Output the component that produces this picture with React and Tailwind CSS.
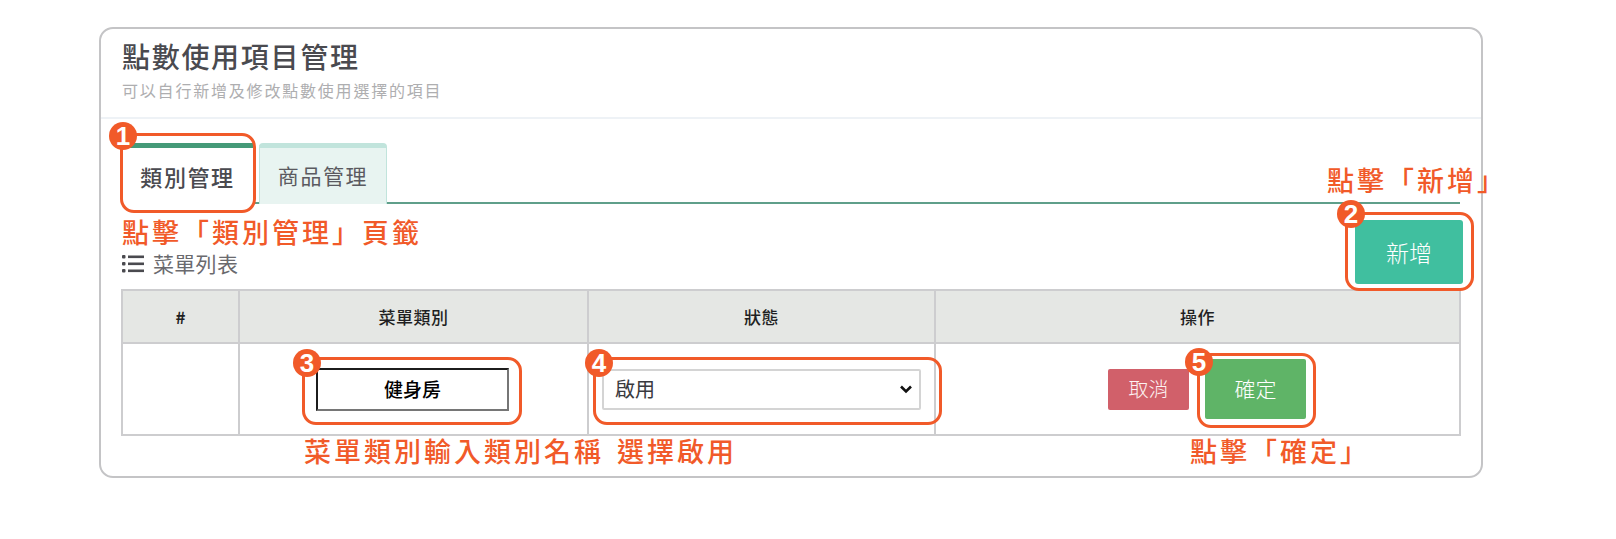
import React from "react";

const font = { fontFamily: '"Noto Sans CJK TC", "Noto Sans", sans-serif' };

const Badge = ({ className, children }) => (
  <div
    className={`absolute w-[28px] h-[28px] rounded-full bg-[#f15a29] text-white flex items-center justify-center text-[26px] font-bold leading-none ${className}`}
    style={{ fontFamily: '"Liberation Sans", sans-serif' }}
  >
    {children}
  </div>
);

const Note = ({ className, children }) => (
  <div className={`absolute text-[#f15a29] font-medium text-[27px] leading-[30px] tracking-[3px] whitespace-pre ${className}`}>{children}</div>
);

const Frame = ({ className }) => (
  <div className={`absolute border-[3px] border-[#f15a29] rounded-[14px] ${className}`} />
);

const App = () => {
  return (
    <div className="relative w-[1616px] h-[539px] bg-white overflow-hidden pt-[27px] pl-[99px]" style={font}>
      {/* card */}
      <div className="w-[1384px] h-[451px] border-2 border-[#c4c4c6] rounded-[14px]">
        <div className="h-[90px] border-b-2 border-[#eef2f6] px-[21px] pt-[7px]">
          <h1 className="text-[28px] leading-[40px] font-medium text-[#4a4a4f] tracking-[1.7px]">點數使用項目管理</h1>
          <p className="text-[16px] leading-[24px] mt-[2px] text-[#aeaeb0] tracking-[1.8px]">可以自行新增及修改點數使用選擇的項目</p>
        </div>

        <div className="px-[21px] pt-[24px]">
          {/* tabs */}
          <div className="flex gap-[6px] h-[61px] border-b-2 border-[#5f9f8a]">
            <div className="w-[131px] h-[61px] bg-white border-t-[5px] border-[#459a78] flex items-center justify-center text-[22px] font-medium text-[#4a4a4f] tracking-[1.6px]">
              類別管理
            </div>
            <div className="w-[128px] h-[61px] bg-[#e8f4f1] border-t-[5px] border-x border-[#c1e4dc] rounded-t-[4px] flex items-center justify-center text-[21px] text-[#5a5a60] tracking-[1.6px]">
              商品管理
            </div>
          </div>

          <div className="flex justify-between items-end mt-[16px] pb-[5px]">
            <div className="flex items-center gap-[9px] text-[21px] leading-[28px] text-[#6a6a6e] tracking-[0.3px] mb-[7px]">
              <svg width="22" height="19" viewBox="0 0 22 19" fill="#4a4a4f">
                <rect x="0" y="1" width="3.5" height="3.5" rx="1" />
                <rect x="0" y="8" width="3.5" height="3.5" rx="1" />
                <rect x="0" y="15" width="3.5" height="3.5" rx="1" />
                <rect x="6" y="1.5" width="16" height="2.6" />
                <rect x="6" y="8.5" width="16" height="2.6" />
                <rect x="6" y="15.5" width="16" height="2.6" />
              </svg>
              菜單列表
            </div>
            <button className="w-[108px] h-[64px] mr-[-3px] bg-[#40bf9f] rounded-[3px] text-white text-[23px] font-light">新增</button>
          </div>

          {/* table */}
          <table className="w-[1340px] -ml-px table-fixed border-collapse text-[17px] text-[#1f1f22]">
            <thead>
              <tr className="h-[53px] bg-[#e5e7e4]">
                <th className="w-[117px] border-2 border-[#cdcdcf] font-bold">#</th>
                <th className="w-[349px] border-2 border-[#cdcdcf] font-medium tracking-[0.5px]">菜單類別</th>
                <th className="w-[347px] border-2 border-[#cdcdcf] font-medium tracking-[0.5px]">狀態</th>
                <th className="border-2 border-[#cdcdcf] font-medium tracking-[0.5px]">操作</th>
              </tr>
            </thead>
            <tbody>
              <tr className="h-[92px]">
                <td className="border-2 border-[#cdcdcf]"></td>
                <td className="border-2 border-[#cdcdcf]">
                  <div className="w-[193px] h-[43px] ml-[76px] border-2 border-t-[#1c1c1c] border-l-[#1c1c1c] border-r-[#767676] border-b-[#767676] flex items-center justify-center text-[19px] font-medium text-black">
                    健身房
                  </div>
                </td>
                <td className="border-2 border-[#cdcdcf]">
                  <div className="w-[319px] h-[41px] ml-[13px] border-2 border-[#d4d4d4] rounded-[2px] flex items-center justify-between pl-[11px] pr-[7px] text-[20px] text-[#3a3a3e]">
                    <span>啟用</span>
                    <svg width="12" height="9" viewBox="0 0 12 9" fill="none" stroke="#111" strokeWidth="2.6">
                      <path d="M1 1.5 L6 6.5 L11 1.5" />
                    </svg>
                  </div>
                </td>
                <td className="border-2 border-[#cdcdcf]">
                  <div className="flex items-center ml-[172px] gap-[16px]">
                    <button className="w-[81px] h-[41px] bg-[#d1606a] rounded-[2px] text-[#fdf3f3] text-[20px] font-light">取消</button>
                    <button className="w-[101px] h-[60px] bg-[#5fb467] rounded-[2px] text-white text-[21px] font-light">確定</button>
                  </div>
                </td>
              </tr>
            </tbody>
          </table>
        </div>
      </div>

      {/* annotations */}
      <Frame className="left-[120px] top-[133px] w-[136px] h-[80px]" />
      <Frame className="left-[1345px] top-[212px] w-[129px] h-[79px]" />
      <Frame className="left-[302px] top-[357px] w-[220px] h-[68px]" />
      <Frame className="left-[593px] top-[357px] w-[349px] h-[68px]" />
      <Frame className="left-[1197px] top-[353px] w-[119px] h-[75px]" />

      <Badge className="left-[109px] top-[122px]">1</Badge>
      <Badge className="left-[1337px] top-[200px]">2</Badge>
      <Badge className="left-[293px] top-[349px]">3</Badge>
      <Badge className="left-[585px] top-[349px]">4</Badge>
      <Badge className="left-[1185px] top-[348px]">5</Badge>

      <Note className="left-[122px] top-[217px]">點擊「類別管理」頁籤</Note>
      <Note className="left-[1327px] top-[165px]">點擊「新增」</Note>
      <Note className="left-[304px] top-[436px] [word-spacing:4px]">菜單類別輸入類別名稱 選擇啟用</Note>
      <Note className="left-[1190px] top-[436px]">點擊「確定」</Note>
    </div>
  );
};

export default App;
